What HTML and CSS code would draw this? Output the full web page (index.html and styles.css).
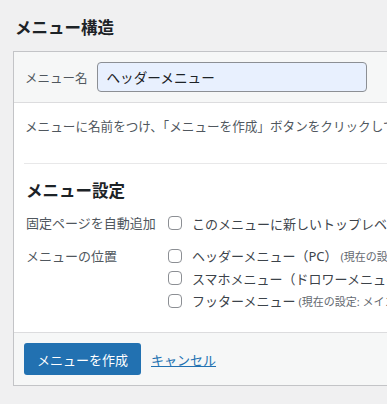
FILE: index.html
```html
<!DOCTYPE html>
<html lang="ja">
<head>
    <meta charset="UTF-8">
    <meta name="viewport" content="width=device-width, initial-scale=1.0">
    <title>メニュー構造</title>
    <link rel="stylesheet" href="styles.css">
</head>
<body>
    <h2 class="page-title">メニュー構造</h2>
    <div class="menu-box">
        <div class="menu-head">
            <label class="name-label" for="menuName">メニュー名</label>
            <input type="text" id="menuName" class="name-input" value="ヘッダーメニュー">
        </div>

        <div class="menu-body">
            <p class="intro">メニューに名前をつけ、「メニューを作成」ボタンをクリックしてください。</p>

            <div class="settings">
                <h3>メニュー設定</h3>
                <div class="setting-row">
                    <div class="setting-name">固定ページを自動追加</div>
                    <div class="setting-input">
                        <label class="opt"><span class="check"></span>このメニューに新しいトップレベルページを自動追加</label>
                    </div>
                </div>
                <div class="setting-row">
                    <div class="setting-name">メニューの位置</div>
                    <div class="setting-input">
                        <label class="opt"><span class="check"></span>ヘッダーメニュー（PC）<span class="note">(現在の設定: グローバルメニュー)</span></label>
                        <label class="opt"><span class="check"></span>スマホメニュー（ドロワーメニュー）<span class="note">(現在の設定: なし)</span></label>
                        <label class="opt"><span class="check"></span>フッターメニュー<span class="note">(現在の設定: メインメニュー)</span></label>
                    </div>
                </div>
            </div>
        </div>

        <div class="menu-foot">
            <button class="save">メニューを作成</button>
            <a href="#" class="cancel">キャンセル</a>
        </div>
    </div>
</body>
</html>
```

FILE: styles.css
```css
html { overflow: hidden; }
body { margin: 0; background: #f0f0f1; color: #3c434a; font-family: "Noto Sans", "Noto Sans CJK JP", sans-serif; overflow: hidden; }

.page-title { font-size: 16.5px; line-height: 22px; font-weight: 600; color: #1d2327; margin: 17px 0 12px 15px; }

.menu-box { width: 560px; margin-left: 13px; background: #fff; border: 1px solid #c3c4c7; }

.menu-head { display: flex; align-items: center; padding: 10px; background: #f6f7f7; border-bottom: 1px solid #dcdcde; }
.name-label { font-size: 12.5px; color: #50575e; margin: 0 9px 0 1px; white-space: nowrap; }
.name-input {
    width: 270px; height: 30px; box-sizing: border-box;
    padding: 0 9px; font-family: inherit; font-size: 13.6px; color: #1d2327;
    background: #e8f0fe; border: 1px solid #8c8f94; border-radius: 4px;
}

.menu-body { padding: 0 10px 20px; }
.intro { margin: 14px 0 0 1px; font-size: 12.6px; line-height: 19px; color: #50575e; white-space: nowrap; }

.settings { margin-top: 27px; border-top: 1px solid #e8e8e9; }
.settings h3 { font-size: 16.5px; line-height: 22px; font-weight: 600; color: #1d2327; margin: 16px 0 10px 2px; }

.setting-row { display: flex; }
.setting-row + .setting-row { margin-top: 10px; }
.setting-name { width: 142px; flex: none; padding-left: 2px; font-size: 13px; line-height: 22px; color: #50575e; white-space: nowrap; }
.setting-input { display: flex; flex-direction: column; }

.opt { display: flex; align-items: center; height: 22.5px; font-size: 13px; color: #3c434a; white-space: nowrap; }
.check { width: 14px; height: 14px; box-sizing: border-box; flex: none; margin-right: 10px; background: #fff; border: 1px solid #8c8f94; border-radius: 4px; }
.note { font-size: 11px; color: #646970; margin-left: 3px; }

.menu-foot { display: flex; align-items: center; padding: 10px; background: #f6f7f7; border-top: 1px solid #dcdcde; }
.save { height: 32px; padding: 0 13px; font-family: inherit; font-size: 13px; color: #fff; background: #2271b1; border: none; border-radius: 3px; cursor: pointer; }
.save:hover { background: #135e96; }
.cancel { margin-left: 10px; font-size: 13px; color: #2271b1; }
```
